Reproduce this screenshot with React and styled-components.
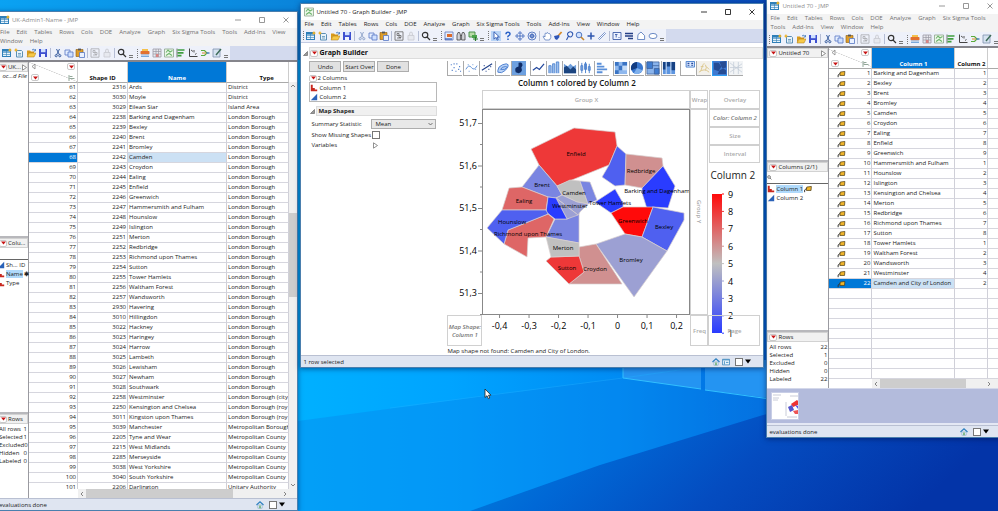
import React from 'react'
import styled, { createGlobalStyle, css } from 'styled-components'

const MENU = ['File', 'Edit', 'Tables', 'Rows', 'Cols', 'DOE', 'Analyze', 'Graph', 'Six Sigma Tools', 'Tools', 'Add-Ins', 'View', 'Window', 'Help']

const SHAPES = [
  [61, 2316, 'Ards', 'District'],
  [62, 3030, 'Moyle', 'District'],
  [63, 3029, 'Eilean Siar', 'Island Area'],
  [64, 2238, 'Barking and Dagenham', 'London Borough'],
  [65, 2239, 'Bexley', 'London Borough'],
  [66, 2240, 'Brent', 'London Borough'],
  [67, 2241, 'Bromley', 'London Borough'],
  [68, 2242, 'Camden', 'London Borough'],
  [69, 2243, 'Croydon', 'London Borough'],
  [70, 2244, 'Ealing', 'London Borough'],
  [71, 2245, 'Enfield', 'London Borough'],
  [72, 2246, 'Greenwich', 'London Borough'],
  [73, 2247, 'Hammersmith and Fulham', 'London Borough'],
  [74, 2248, 'Hounslow', 'London Borough'],
  [75, 2249, 'Islington', 'London Borough'],
  [76, 2251, 'Merton', 'London Borough'],
  [77, 2252, 'Redbridge', 'London Borough'],
  [78, 2253, 'Richmond upon Thames', 'London Borough'],
  [79, 2254, 'Sutton', 'London Borough'],
  [80, 2255, 'Tower Hamlets', 'London Borough'],
  [81, 2256, 'Waltham Forest', 'London Borough'],
  [82, 2257, 'Wandsworth', 'London Borough'],
  [83, 2930, 'Havering', 'London Borough'],
  [84, 3010, 'Hillingdon', 'London Borough'],
  [85, 3022, 'Hackney', 'London Borough'],
  [86, 3023, 'Haringey', 'London Borough'],
  [87, 3024, 'Harrow', 'London Borough'],
  [88, 3025, 'Lambeth', 'London Borough'],
  [89, 3026, 'Lewisham', 'London Borough'],
  [90, 3027, 'Newham', 'London Borough'],
  [91, 3028, 'Southwark', 'London Borough'],
  [92, 2258, 'Westminster', 'London Borough (city'],
  [93, 2250, 'Kensington and Chelsea', 'London Borough (roy'],
  [94, 3011, 'Kingston upon Thames', 'London Borough (roy'],
  [95, 3039, 'Manchester', 'Metropolitan Borough'],
  [96, 2205, 'Tyne and Wear', 'Metropolitan County'],
  [97, 2215, 'West Midlands', 'Metropolitan County'],
  [98, 2285, 'Merseyside', 'Metropolitan County'],
  [99, 3038, 'West Yorkshire', 'Metropolitan County'],
  [100, 3040, 'South Yorkshire', 'Metropolitan County'],
  [101, 2206, 'Darlington', 'Unitary Authority'],
]

const BOROUGHS = [
  ['Barking and Dagenham', 1],
  ['Bexley', 2],
  ['Brent', 3],
  ['Bromley', 4],
  ['Camden', 5],
  ['Croydon', 6],
  ['Ealing', 7],
  ['Enfield', 8],
  ['Greenwich', 9],
  ['Hammersmith and Fulham', 1],
  ['Hounslow', 2],
  ['Islington', 3],
  ['Kensington and Chelsea', 4],
  ['Merton', 5],
  ['Redbridge', 6],
  ['Richmond upon Thames', 7],
  ['Sutton', 8],
  ['Tower Hamlets', 1],
  ['Waltham Forest', 2],
  ['Wandsworth', 3],
  ['Westminster', 4],
  ['Camden and City of London', 2],
]

const RAMP = { 1: '#2a3cff', 2: '#4f60f0', 3: '#7a85e1', 4: '#9ca0d3', 5: '#c0c0c0', 6: '#d09090', 7: '#de6666', 8: '#ee3838', 9: '#ff0a0a' }

const REGIONS = [
  [8, '92,19 133,23 135,37 127,56 75,77 57,56 49,40'],
  [2, '135,37 144,45 143,76 133,77 120,68 127,56'],
  [6, '144,45 180,49 181,57 160,79 143,76'],
  [1, '181,57 193,77 186,99 171,98 165,100 160,84 160,79'],
  [3, '57,56 75,77 80,86 74,89 66,88 40,78'],
  [7, '40,78 27,79 20,101 64,101 66,88'],
  [5, '75,77 88,71 98,72 106,95 95,93 80,86'],
  [3, '98,72 108,73 115,91 106,95'],
  [3, '73,110 85,110 97,103 97,134 64,128'],
  [4, '80,86 95,93 106,95 98,103 96,106 74,89'],
  [4, '74,89 96,106 85,110'],
  [1, '66,88 74,89 85,110 73,110 64,103'],
  [1, '133,80 141,94 141,98 129,104 113,93'],
  [9, '129,104 141,98 171,98 160,128 143,125'],
  [2, '171,98 202,104 202,111 185,142 160,128'],
  [4, '160,128 185,142 152,188 114,135 143,125'],
  [6, '97,138 114,135 140,175 87,175 102,163 97,147'],
  [8, '69,148 97,147 102,163 87,175 64,152'],
  [5, '64,128 97,134 97,147 69,148'],
  [7, '66,105 72,110 64,128 46,129 45,148 22,135 26,121'],
  [2, '20,101 64,101 66,105 26,121 22,135 5,119'],
]

const MAP_LABELS = [
  ['Enfield', 94, 45],
  ['Redbridge', 159, 62],
  ['Barking and Dagenham', 175, 82],
  ['Brent', 60, 76],
  ['Camden', 92, 84],
  ['Ealing', 42, 92],
  ['Tower Hamlets', 128, 94],
  ['Westminster', 88, 97],
  ['Greenwich', 151, 112],
  ['Bexley', 182, 118],
  ['Hounslow', 30, 113],
  ['Richmond upon Thames', 46, 125],
  ['Merton', 81, 139],
  ['Bromley', 149, 151],
  ['Sutton', 85, 159],
  ['Croydon', 113, 160],
]

/* toolbar glyphs, all on a 10 x 10 grid */
const GLYPHS = {
  newTable: (
    <>
      <rect x="0.5" y="1.5" width="8" height="7" fill="#e8f3fb" stroke="#2f7fb8" />
      <path d="M0.5 4.5h8M0.5 6.5h8M4.5 2v6" stroke="#2f7fb8" strokeWidth="0.6" />
      <rect x="1" y="2" width="8" height="1.6" fill="#2f7fb8" />
      <path d="M8 0l0.8 1.5 1.2 0.5-1.2 0.8L8 4 7 2.8 5.8 2 7 1.5z" fill="#f0b429" />
    </>
  ),
  newScript: (
    <>
      <path d="M2.5 2.5h5l1 1v5.5h-6z" fill="#e8f3fb" stroke="#5b8fb5" />
      <path d="M4 5.5h3M4 7h3" stroke="#5b8fb5" strokeWidth="0.8" />
      <path d="M2 0l0.8 1.5L4 2l-1.2 0.8L2 4 1 2.8 0 2l1-0.5z" fill="#f0b429" />
    </>
  ),
  open: (
    <>
      <path d="M1 2.5h3l1 1h3V5H3L1 9z" fill="#d99a1c" />
      <path d="M3 5h7L8 9H1z" fill="#f7c948" stroke="#a8740e" strokeWidth="0.5" />
      <path d="M6 2q2-2 3 0.5M9.4 1v2H7.6" fill="none" stroke="#2f6bb8" strokeWidth="0.8" />
    </>
  ),
  save: (
    <>
      <path d="M1 1h8v8H1z" fill="#3d4fd0" />
      <path d="M3 1h4.5v3.2H3z" fill="#cfe0ff" />
      <path d="M3 6h4v3H3z" fill="#eef3ff" />
    </>
  ),
  cut: <path d="M3.5 1l3 6M6.5 1l-3 6M4.3 7.7a1.1 1.1 0 1 1-2.2 0 1.1 1.1 0 0 1 2.2 0M7.9 7.7a1.1 1.1 0 1 1-2.2 0 1.1 1.1 0 0 1 2.2 0" fill="none" stroke="#3b5fa0" strokeWidth="1" />,
  copy: (
    <>
      <path d="M1 2h5v5H1z" fill="#e6efff" stroke="#5777c4" strokeWidth="0.8" />
      <path d="M4 4h5v5H4z" fill="#cfe0ff" stroke="#5777c4" strokeWidth="0.8" />
    </>
  ),
  paste: (
    <>
      <path d="M1 1.5h7v7H1z" fill="#dd9d2a" stroke="#8a5a10" strokeWidth="0.6" />
      <path d="M3 0.6h3v1.8H3z" fill="#555" />
      <path d="M4.5 4.5h5v5h-5z" fill="#eaf1ff" stroke="#5777c4" strokeWidth="0.8" />
    </>
  ),
  script: <path d="M1 0.8h8v8.4H1zM3 2.5h2v2H3zM5 4.5h2v2H5zM3 7h4" fill="none" stroke="#666" strokeWidth="0.8" />,
  lock: <path d="M2 4.5h6v4.5H2zM3.5 4.5V2.6a1.5 1.5 0 0 1 3 0v1.9" fill="#e2e2e6" stroke="#a4a4aa" strokeWidth="0.8" />,
  search: <path d="M6.8 4a2.7 2.7 0 1 1-5.4 0 2.7 2.7 0 0 1 5.4 0M6 6l3 3" fill="none" stroke="#333" strokeWidth="1.2" />,
  printer: (
    <>
      <path d="M2 1h6v3H2z" fill="#f4c14c" />
      <rect x="0.5" y="3" width="9" height="3.4" rx="0.8" fill="#e2702e" />
      <path d="M1 6.4h8V9H1z" fill="#7aa7d8" />
      <path d="M1 7.2h8" stroke="#fff" strokeWidth="0.7" />
    </>
  ),
  summary: (
    <>
      <path d="M1 1h8v8H1z" fill="#e9e9ee" stroke="#9a9aa4" strokeWidth="0.8" />
      <path d="M1 3.5h8M1 6h8M4 1v8M6.5 1v8" stroke="#9a9aa4" strokeWidth="0.7" />
      <path d="M4 6h2.5v3H4z" fill="#d78383" />
    </>
  ),
  greenMap: (
    <>
      <path d="M0.5 1h9v8h-9z" fill="#eef8ea" stroke="#8aa48a" strokeWidth="0.8" />
      <path d="M2 4.5l2-2.5 2 2 2.5-1.5M2 7.5l3-2 3 2" fill="none" stroke="#6db46d" strokeWidth="1.1" />
    </>
  ),
  greenBars: (
    <>
      <path d="M1 0.5v9" stroke="#555" strokeWidth="0.8" />
      <path d="M1.5 2h7M1.5 4.8h6M1.5 7.6h4" stroke="#3f9e3f" strokeWidth="1.7" />
    </>
  ),
  fitAxis: (
    <>
      <path d="M1.5 0.5v8h8" fill="none" stroke="#444" strokeWidth="1" />
      <path d="M3 2l2 1.5M6 2v2.5M7 6.5l1.5-1" stroke="#444" strokeWidth="0.9" />
    </>
  ),
  join: (
    <>
      <path d="M1 2.5h3.5L7 5 4.5 7.5H1" fill="none" stroke="#5aaa3c" strokeWidth="1.2" />
      <path d="M6.5 5h3" stroke="#3d7ab8" strokeWidth="1.4" />
      <path d="M2 5h4" stroke="#d88b2a" strokeWidth="1" />
    </>
  ),
  edit: (
    <>
      <path d="M1 1h7v8H1z" fill="#d6e2f0" stroke="#7d93ad" strokeWidth="0.8" />
      <path d="M4 7l5-6" stroke="#3c6b58" strokeWidth="1.4" />
    </>
  ),
  report: (
    <>
      <path d="M1 1h8v8H1z" fill="#e8edfa" stroke="#5a74b8" strokeWidth="0.8" />
      <path d="M3 3h5v3H3z" fill="#dd6a2a" />
      <path d="M1 8h7" stroke="#2e56b0" strokeWidth="1.2" />
    </>
  ),
  binoculars: <path d="M1 9V4l1-2.5h1.6L4.4 4v5zM9 9V4L8 1.5H6.4L5.6 4v5zM4.4 4.5h1.4" fill="#d4d4da" stroke="#444" strokeWidth="0.8" />,
  addData: (
    <>
      <path d="M1 1h6v5H1z" fill="#b9dca8" stroke="#3f8a3f" strokeWidth="0.9" />
      <path d="M4 4h5v3H4z" fill="#4aa44a" />
      <path d="M5 8h5M7.5 6v4" stroke="#2b7a2b" strokeWidth="1.2" />
    </>
  ),
  arrow: <path d="M3 0.8v7.4l1.8-1.8 1.4 2.8 1-0.6-1.2-2.6h2.4z" fill="#fff" stroke="#2a56b0" strokeWidth="0.9" />,
  help: <path d="M3 3.2q0-2 2-2t2 1.8q0 1-1.2 1.6T5 6.2M5 7.6v1.4" fill="none" stroke="#2a62c8" strokeWidth="1.5" />,
  move: <path d="M5 0.5l1.6 1.8H3.4zM5 9.5l1.6-1.8H3.4zM0.5 5l1.8-1.6v3.2zM9.5 5L7.7 3.4v3.2zM4 4h2v2H4z" fill="#dfe9ff" stroke="#3a62b8" strokeWidth="0.8" />,
  globe: <path d="M9 5a4 4 0 1 1-8 0 4 4 0 0 1 8 0M5 2v6M2 5h6M3.5 3.5h3v3h-3z" fill="none" stroke="#3a62b8" strokeWidth="0.8" />,
  hand: <path d="M3.2 9L1 5.5l1-0.5 1 1V2.5l1-0.5 0.5 0.5L5 1.500l1 0.500 0.500 0.500h1l0.500 1 0.800 0.500V6.500L7.500 9z" fill="#fff" stroke="#4a70b8" strokeWidth="0.7" />,
  brush: (
    <>
      <path d="M5 5l3.6-4" stroke="#d88b2a" strokeWidth="1.8" />
      <path d="M1 5l5-1 0.5 2L4 9l-2-1z" fill="#2f56b8" />
    </>
  ),
  lasso: <path d="M2.5 9l2-4q-2-2 0-3.5t3.5 0 0 3.5-3.5 0" fill="none" stroke="#2e56b0" strokeWidth="1.1" />,
  zoomIn: (
    <>
      <circle cx="4" cy="4" r="2.8" fill="#cfe0ff" stroke="#3f69b8" strokeWidth="0.9" />
      <path d="M6 6l3 3" stroke="#c7862a" strokeWidth="1.6" />
    </>
  ),
  plus: <path d="M5 1.5v7M1.5 5h7" stroke="#2e56b0" strokeWidth="1.5" />,
  line: <path d="M1.5 7.5L7.5 1.5l1 1L2.5 8.5z" fill="#fff" stroke="#5a7cc0" strokeWidth="0.8" />,
  note: <path d="M1 1.5h8v7H1zM3 3.5h2.5M4.2 3.5v3M6.5 6.5h1" fill="#eef3ff" stroke="#3f5fa8" strokeWidth="0.9" />,
  lines: <path d="M1 2.5h8M1 5h8M4 7.5h5" stroke="#243f86" strokeWidth="1.5" />,
  polygon: <path d="M2 3.5L5 1l3.6 3.6V8.5H1.6z" fill="#fff" stroke="#4a70b8" strokeWidth="0.8" />,
  ellipse: <ellipse cx="5" cy="5" rx="4" ry="2.6" fill="#fff" stroke="#4a70b8" strokeWidth="0.8" />,
  home: (
    <>
      <path d="M0.6 5L5 1l4.4 4" fill="none" stroke="#2a7fc0" strokeWidth="1.4" />
      <path d="M2.4 5h5.2v4H2.4z" fill="#f3f9ff" stroke="#5b8fb5" strokeWidth="0.6" />
      <path d="M4.2 5.6h1.6V9H4.2z" fill="#4a9a4a" />
    </>
  ),
  list: (
    <>
      <path d="M0.6 1.6h8.8v7H0.6z" fill="#e8f3fb" stroke="#2f7fb8" strokeWidth="0.9" />
      <path d="M1 2.4h8M3 4v4M5 5.5h3" stroke="#2f7fb8" strokeWidth="1" />
    </>
  ),
  tag: (
    <>
      <path d="M0.8 9V6.2L4 3.6" fill="none" stroke="#333" strokeWidth="1.2" />
      <path d="M3.4 2.6l5.8-0.8-0.4 5H3z" fill="#f2b62a" stroke="#4a3a14" strokeWidth="0.9" />
    </>
  ),
  nominal: <path d="M1 9V1h2.4v4H6v2h3v2z" fill="#c8281e" />,
  continuous: <path d="M1 9L9 1v8z" fill="#2a62b8" />,
}

const Glyph = ({ name }) => (
  <svg width="10" height="10" viewBox="0 0 10 10" aria-hidden="true">
    {GLYPHS[name]}
  </svg>
)

/* chart type thumbnails, 15 x 15 */
const CHARTS = {
  points: <path d="M3 4h1M6 7h1M9 3h1M12 6h1M4 10h1M8 11h1M11 9h1M6 3h1M13 11h1" stroke="#2f66c0" strokeWidth="1.3" />,
  smoother: <path d="M2 9q3-6 6-2t6-2M4 4h1M9 4h1M12 9h1M5 11h1" fill="none" stroke="#4a82d0" strokeWidth="0.9" />,
  fit: <path d="M2 10l11-7M4 5h1M9 9h1M11 6h1M6 11h1" stroke="#20408a" strokeWidth="1.2" />,
  contourLine: <path d="M2 10q0-4 5-6t6 0-3 6-8 2zM5 9q1-3 5-3t-1 3z" fill="#b9d2f6" stroke="#3c74cc" strokeWidth="0.9" />,
  heat: (
    <>
      <path d="M0 0h15v15H0z" fill="#6da0e0" />
      <path d="M4 12q-2-5 3-6V2q3-1 4 1t-1 4q2 5-3 6z" fill="#0f2c66" />
    </>
  ),
  lineChart: <path d="M2 10l4-3 3 2 5-6" fill="none" stroke="#23489c" strokeWidth="1.3" />,
  bar: <path d="M2 13V5h2.4v8M6 13V3h2.4v10M10 13V1h2.6v12" fill="#9cc0f0" stroke="#4a80cc" strokeWidth="0.9" />,
  area: (
    <>
      <path d="M1 13V3l4 3 3-3 3 3 3-2v9z" fill="#6f9fdc" />
      <path d="M1 13V7l3-2 4 4 3-3 3 3v4z" fill="#1c4580" />
    </>
  ),
  box: <path d="M3 2v11M7 1v12M11 3v10M2 5h2v5H2zM6 3h2v6H6zM10 6h2v4h-2z" fill="#cfe2fc" stroke="#4a80cc" strokeWidth="1" />,
  histogram: <path d="M2 3h5M2 6h8M2 9h11M2 12h6" stroke="#5a90da" strokeWidth="2" />,
  heatmap: (
    <>
      <path d="M1 1h13v13H1z" fill="#8fb8ee" />
      <path d="M1 1h4v4H1zM9 1h5v4H9zM5 5h4v5H5zM1 10h4v4H1z" fill="#3a74c4" />
      <path d="M9 5h5v5H9z" fill="#c4dcf8" />
    </>
  ),
  pie: (
    <>
      <circle cx="7.5" cy="7.5" r="6.5" fill="#3a78d0" />
      <path d="M7.5 7.5V1a6.5 6.5 0 0 0-6 9z" fill="#123c82" />
      <path d="M7.5 7.5l6 2.5A6.5 6.5 0 0 1 4 13z" fill="#7fb0ec" />
    </>
  ),
  treemap: (
    <>
      <path d="M1 1h13v13H1z" fill="#8ab4ec" stroke="#3d5f98" strokeWidth="0.8" />
      <path d="M1 1h6v7H1zM9 8h5v6H9z" fill="#3f7cd0" stroke="#3d5f98" strokeWidth="0.8" />
      <path d="M7 5h7" stroke="#3d5f98" strokeWidth="0.8" />
    </>
  ),
  mosaic: (
    <>
      <path d="M1 1h13v13H1z" fill="#5d95e0" />
      <path d="M1 1h3v8H1zM5 1h4v5H5zM10 1h4v9h-4z" fill="#164284" />
      <path d="M4.5 1v13M9.5 1v13" stroke="#fff" strokeWidth="0.7" />
    </>
  ),
  caption: (
    <>
      <path d="M5.5 0.5h9v6h-9z" fill="#dbe9ff" stroke="#4a80cc" strokeWidth="1" />
      <path d="M7 2.5h2M11 2.5h2M7 4.5h2M11 4.5h2" stroke="#23489c" strokeWidth="1.2" />
    </>
  ),
  formula: (
    <>
      <path d="M0 0h15v15H0z" fill="#f3f1ec" />
      <path d="M4 11q3-10 4-8M4 6h3M9 4q2 3 0 6M10 6l3 3M2 12q6-5 11 0" fill="none" stroke="#dcc68a" strokeWidth="1" />
    </>
  ),
  mapShapes: (
    <>
      <path d="M0 0h15v15H0z" fill="#3f79d0" />
      <path d="M1 2l5 0 3 4-3 5-5-2zM7 1l7-1v7l-4 1zM7 10l4-2 3 2v4H5z" fill="#264c94" />
    </>
  ),
  parallel: (
    <>
      <path d="M0 0h15v15H0z" fill="#f2f4f6" />
      <path d="M1 2l13 10M1 12L14 3M1 7h13M5 1v13M10 1v13" stroke="#c2ccd8" strokeWidth="0.8" />
    </>
  ),
}

const CHART_GROUPS = [
  ['points', 'smoother', 'fit', 'contourLine', 'heat'],
  ['lineChart', 'bar', 'area', 'box', 'histogram'],
  ['heatmap', 'pie', 'treemap', 'mosaic'],
  ['caption', 'formula', 'mapShapes', 'parallel'],
]

const FILE_TOOLS = [
  [['newTable', 'newScript', 'open', 'save'], 2],
  [['cut', 'copy', 'paste'], 1],
  [['script', 'lock'], 2],
  [['search'], 2],
]

const DATA_TOOLS = [[['printer', 'summary', 'greenMap', 'greenBars', 'fitAxis', 'join', 'edit'], 2]]

const Tools = ({ groups, active, faded = [] }) => (
  <ToolStrip>
    <Grip />
    {groups.map(([names, gap], i) => (
      <ToolGroup key={i} $gap={gap} $divided={i > 0}>
        {names.map((name) => (
          <Tool key={name} type="button" aria-label={name} $active={name === active} $faded={faded.includes(name)}>
            <Glyph name={name} />
          </Tool>
        ))}
      </ToolGroup>
    ))}
    <Overflow />
  </ToolStrip>
)

const TitleRow = ({ icon, title, active }) => (
  <TitleBar $active={active}>
    <Glyph name={icon} />
    <WindowTitle>{title}</WindowTitle>
    {[
      ['Minimize', 'M0 4h6'],
      ['Maximize', 'M0.5 1.5h5v5h-5z'],
      ['Close', 'M0.5 1.5l5 5M5.5 1.5l-5 5'],
    ].map(([label, d]) => (
      <WindowButton key={label} type="button" aria-label={label}>
        <svg width="6" height="8" viewBox="0 0 6 8">
          <path d={d} fill="none" stroke="currentColor" strokeWidth="0.9" />
        </svg>
      </WindowButton>
    ))}
  </TitleBar>
)

const Menu = ({ active }) => (
  <MenuBar $active={active}>
    {MENU.map((item) => (
      <MenuItem key={item} type="button">
        {item}
      </MenuItem>
    ))}
  </MenuBar>
)

const RedTriangle = () => (
  <Hotspot type="button" aria-label="Options">
    <svg width="5" height="4" viewBox="0 0 5 4">
      <path d="M0 0.5h5L2.5 3.5z" fill="#c81414" />
    </svg>
  </Hotspot>
)

const Disclosure = ({ open }) => (
  <svg width="5" height="7" viewBox="0 0 5 7" aria-hidden="true">
    <path d={open ? 'M0.5 5.5h4v-4z' : 'M0.5 0.8v5.4l4-2.7z'} fill={open ? '#999' : '#fff'} stroke="#777" strokeWidth="0.8" />
  </svg>
)

const Chevron = ({ turn }) => (
  <svg width="8" height="8" viewBox="0 0 8 8" aria-hidden="true">
    <path d="M2 5l2-2 2 2" fill="none" stroke="#777" strokeWidth="0.9" transform={`rotate(${turn} 4 4)`} />
  </svg>
)

const CornerCell = () => (
  <Corner>
    <CornerLine>
      <svg width="5" height="7" viewBox="0 0 5 7">
        <path d="M4 1v5L1 3.5z" fill="none" stroke="#888" strokeWidth="0.8" />
      </svg>
      <RedTriangle />
    </CornerLine>
    <CornerLine>
      <RedTriangle />
      <svg width="7" height="6" viewBox="0 0 7 6">
        <path d="M1 0v6M1.5 1.5h3M1.5 3.5h5" stroke="#93a89a" />
      </svg>
    </CornerLine>
  </Corner>
)

const HBar = ({ inset, ratio }) => (
  <HScroll $inset={inset}>
    <Chevron turn={-90} />
    <HTrack>
      <HThumb $ratio={ratio} />
    </HTrack>
    <Chevron turn={90} />
  </HScroll>
)

const StatusBar = ({ text, withList }) => (
  <Status>
    <span>{text}</span>
    <StatusIcons>
      <Glyph name="home" />
      {withList && <Glyph name="list" />}
      <StatusCheck type="checkbox" aria-label="Lock window" />
      <svg width="6" height="5" viewBox="0 0 6 5">
        <path d="M0 0.5h6L3 4.5z" />
      </svg>
    </StatusIcons>
  </Status>
)

const RowCounts = ({ counts }) => (
  <Counts>
    {counts.map(([label, n]) => (
      <div key={label}>
        <dt>{label}</dt>
        <dd>{n}</dd>
      </div>
    ))}
  </Counts>
)

const ShapeTable = () => (
  <TableWindow>
    <TitleRow icon="newTable" title="UK-Admin1-Name - JMP" />
    <Menu />
    <ToolArea>
      <Tools groups={FILE_TOOLS} faded={['script', 'lock']} />
      <Tools groups={DATA_TOOLS} />
    </ToolArea>
    <Body>
      <Sidebar $width={32}>
        <Panel $grow={1}>
          <PanelHead>
            <RedTriangle />
            <span>UK...</span>
            <Disclosure />
          </PanelHead>
          <PanelNote>oc...d File</PanelNote>
        </Panel>
        <Panel $grow={1}>
          <PanelHead>
            <RedTriangle />
            <span>Colu...</span>
          </PanelHead>
          <SearchBox type="search" aria-label="Search columns" />
          <ColumnItem>
            <Glyph name="continuous" />
            <span>Sh... ID</span>
          </ColumnItem>
          <ColumnItem $selected>
            <Glyph name="nominal" />
            <span>Name</span>
            <b>✱</b>
          </ColumnItem>
          <ColumnItem>
            <Glyph name="nominal" />
            <span>Type</span>
          </ColumnItem>
        </Panel>
        <Panel $basis={86}>
          <PanelHead>
            <RedTriangle />
            <span>Rows</span>
          </PanelHead>
          <RowCounts counts={[['All rows', 1], ['Selected', 1], ['Excluded', 0], ['Hidden', 0], ['Labeled', 0]]} />
        </Panel>
      </Sidebar>
      <Main>
        <TableView>
          <Grid>
            <colgroup>
              <col width="49" />
              <col width="50" />
              <col width="99" />
              <col />
            </colgroup>
            <thead>
              <tr>
                <th>
                  <CornerCell />
                </th>
                <HeadCell>Shape ID</HeadCell>
                <HeadCell $selected>Name</HeadCell>
                <HeadCell $wide>Type</HeadCell>
              </tr>
            </thead>
            <tbody>
              {SHAPES.map(([n, id, name, type]) => (
                <tr key={n}>
                  <Cell $align="right" $marked={n === 68}>{n}</Cell>
                  <Cell $align="right">{id}</Cell>
                  <Cell $tinted={n === 68}>{name}</Cell>
                  <Cell>{type}</Cell>
                </tr>
              ))}
            </tbody>
          </Grid>
          <VScroll>
            <Chevron turn={0} />
            <span />
            <VThumb />
            <span />
            <Chevron turn={180} />
          </VScroll>
        </TableView>
        <HBar inset={49} ratio={75} />
      </Main>
    </Body>
    <StatusBar text="evaluations done" />
  </TableWindow>
)

const BoroughTable = () => (
  <BoroughWindow>
    <TitleRow icon="newTable" title="Untitled 70 - JMP" />
    <Menu />
    <ToolArea>
      <Tools groups={FILE_TOOLS} faded={['script', 'lock']} />
      <Tools groups={DATA_TOOLS} />
    </ToolArea>
    <Body>
      <Sidebar $width={62}>
        <Panel $grow={2}>
          <PanelHead>
            <RedTriangle />
            <span>Untitled 70</span>
            <Disclosure />
          </PanelHead>
        </Panel>
        <Panel $grow={3}>
          <PanelHead>
            <RedTriangle />
            <span>Columns (2/1)</span>
          </PanelHead>
          <SearchRow>
            <Glyph name="search" />
            <SearchBox type="search" aria-label="Search columns" />
          </SearchRow>
          <ColumnItem $selected>
            <Glyph name="nominal" />
            <span>Column 1</span>
            <Glyph name="tag" />
          </ColumnItem>
          <ColumnItem>
            <Glyph name="continuous" />
            <span>Column 2</span>
          </ColumnItem>
        </Panel>
        <Panel $basis={58}>
          <PanelHead>
            <RedTriangle />
            <span>Rows</span>
          </PanelHead>
          <RowCounts counts={[['All rows', 22], ['Selected', 1], ['Excluded', 0], ['Hidden', 0], ['Labeled', 22]]} />
        </Panel>
      </Sidebar>
      <Main>
        <Grid>
          <colgroup>
            <col width="43" />
            <col width="83" />
            <col width="33" />
            <col />
          </colgroup>
          <thead>
            <tr>
              <th>
                <CornerCell />
              </th>
              <HeadCell $selected>Column 1</HeadCell>
              <HeadCell>Column 2</HeadCell>
              <HeadCell />
            </tr>
          </thead>
          <tbody>
            {BOROUGHS.map(([name, value], i) => (
              <tr key={name}>
                <Cell $marked={i === 21}>
                  <RowState>
                    <Glyph name="tag" />
                    {i + 1}
                  </RowState>
                </Cell>
                <Cell $tinted={i === 21}>{name}</Cell>
                <Cell $align="right">{value}</Cell>
                <Cell />
              </tr>
            ))}
            {Array.from({ length: 9 }, (_, i) => (
              <tr key={i}>
                <Cell />
                <Cell />
                <Cell />
                <Cell />
              </tr>
            ))}
          </tbody>
        </Grid>
        <HBar inset={43} ratio={82} />
      </Main>
    </Body>
    <Tray>
      <Thumb viewBox="0 0 26 26">
        <path d="M0 0h26v26H0z" fill="#fff" />
        <path d="M1 2h8M1 5h6M1 7h5M18 3h8M14 9v14M15 24h10" stroke="#c9ccd8" />
        <path d="M19 11l6-4 1 1v4l-5 2z" fill="#e33" />
        <path d="M16 14l4-2 2 5-4 2z" fill="#55c" />
        <path d="M21 18l5-1v4h-3z" fill="#e55" />
        <path d="M23 12l3 1v3z" fill="#55e" />
      </Thumb>
    </Tray>
    <StatusBar text="evaluations done" />
  </BoroughWindow>
)

const GraphBuilder = () => (
  <GraphWindow>
    <TitleRow icon="greenMap" title="Untitled 70 - Graph Builder - JMP" active />
    <Menu active />
    <ToolArea $active>
      <Tools groups={FILE_TOOLS} faded={['cut', 'lock']} />
      <Tools groups={[[['report', 'binoculars', 'addData'], 2]]} />
      <Tools
        active="arrow"
        groups={[
          [['arrow', 'help', 'move', 'globe'], 2],
          [['hand', 'brush', 'lasso', 'zoomIn', 'plus', 'line'], 1],
          [['note', 'lines', 'polygon', 'ellipse'], 2],
        ]}
      />
    </ToolArea>
    <OutlineRow>
      <Disclosure open />
      <OutlineTitle>
        <RedTriangle />
        <h1>Graph Builder</h1>
      </OutlineTitle>
    </OutlineRow>
    <Builder>
      <Controls>
        <ButtonRow>
          <ActionButton type="button">Undo</ActionButton>
          <ActionButton type="button">Start Over</ActionButton>
          <ActionButton type="button">Done</ActionButton>
        </ButtonRow>
        <ColumnsLabel>
          <RedTriangle />2 Columns
        </ColumnsLabel>
        <ColumnBox>
          <ColumnItem>
            <Glyph name="nominal" />
            <span>Column 1</span>
          </ColumnItem>
          <ColumnItem>
            <Glyph name="continuous" />
            <span>Column 2</span>
          </ColumnItem>
        </ColumnBox>
        <SubOutline>
          <Disclosure open />
          <h2>Map Shapes</h2>
        </SubOutline>
        <Fields>
          <label htmlFor="stat">Summary Statistic</label>
          <Select id="stat" defaultValue="Mean">
            <option>Mean</option>
            <option>Median</option>
          </Select>
          <label htmlFor="missing">Show Missing Shapes</label>
          <Check id="missing" type="checkbox" />
          <span>Variables</span>
          <Expander type="button" aria-label="Variables">
            <Disclosure />
          </Expander>
        </Fields>
      </Controls>
      <Stage>
        <ChartTypes>
          {CHART_GROUPS.map((group) => (
            <ChartGroup key={group[0]}>
              {group.map((name) => (
                <ChartButton key={name} type="button" aria-label={name} $active={name === 'mapShapes'}>
                  <svg width="14" height="14" viewBox="0 0 15 15">
                    {CHARTS[name]}
                  </svg>
                </ChartButton>
              ))}
            </ChartGroup>
          ))}
        </ChartTypes>
        <ChartTitle>Column 1 colored by Column 2</ChartTitle>
        <PlotGrid>
          <Zone $area="gx">Group X</Zone>
          <Zone $area="wrap">Wrap</Zone>
          <YAxis viewBox="0 0 35 206">
            {['51,7', '51,6', '51,5', '51,4', '51,3'].map((t, i) => (
              <g key={t}>
                <text x="30" y={17 + i * 42.5} textAnchor="end">{t}</text>
                <path d={`M31 ${14.5 + i * 42.5}h4M33 ${35.5 + i * 42.5}h2`} stroke="#888" />
              </g>
            ))}
          </YAxis>
          <Plot viewBox="1 1 206 204">
            <g stroke="#d8d0d0" strokeWidth="0.7">
              {REGIONS.map(([value, points]) => (
                <polygon key={points} points={points} fill={RAMP[value]} />
              ))}
            </g>
            {MAP_LABELS.map(([name, x, y]) => (
              <text key={name} x={x} y={y + 2} textAnchor="middle">{name}</text>
            ))}
          </Plot>
          <Zone $area="gy" $vertical>
            <span>Group Y</span>
          </Zone>
          <SideZones>
            <Zone $height={19}>Overlay</Zone>
            <Zone $height={18} $filled>Color: Column 2</Zone>
            <Zone $height={18}>Size</Zone>
            <Zone $height={18}>Interval</Zone>
            <LegendTitle>Column 2</LegendTitle>
            <Legend viewBox="0 0 50 148">
              <defs>
                <linearGradient id="ramp" x1="0" y1="0" x2="0" y2="1">
                  <stop offset="0" stopColor="#ff0a0a" />
                  <stop offset="0.5" stopColor="#c0c0c0" />
                  <stop offset="1" stopColor="#2a3cff" />
                </linearGradient>
              </defs>
              <rect x="3" y="4" width="10" height="139" fill="url(#ramp)" />
              {[9, 8, 7, 6, 5, 4, 3, 2, 1].map((n, i) => (
                <g key={n}>
                  <path d={`M13 ${4 + i * 17.4}h2`} stroke={RAMP[n]} />
                  <text x="19" y={7.5 + i * 17.4}>{n}</text>
                </g>
              ))}
            </Legend>
          </SideZones>
          <Zone $area="shape" $filled>
            <div>
              Map&nbsp;Shape:
              <br />
              Column 1
            </div>
          </Zone>
          <XAxis viewBox="0 0 208 31">
            {['-0,4', '-0,3', '-0,2', '-0,1', '0', '0,1', '0,2'].map((t, i) => (
              <g key={t}>
                <path d={`M${17.5 + i * 29.5} 0v3`} stroke="#888" />
                <text x={17.5 + i * 29.5} y="14" textAnchor="middle">{t}</text>
              </g>
            ))}
          </XAxis>
          <Zone $area="freq">Freq</Zone>
          <Zone $area="page">Page</Zone>
        </PlotGrid>
        <Message>Map shape not found: Camden and City of London.</Message>
      </Stage>
    </Builder>
    <StatusBar text="1 row selected" withList />
  </GraphWindow>
)

const App = () => {
  return (
    <>
      <GlobalStyle />
      <Desktop>
        <Wallpaper viewBox="0 0 998 511" preserveAspectRatio="none" aria-hidden="true">
          <defs>
            <linearGradient id="sky" x1="0" y1="0" x2="1" y2="0">
              <stop offset="0" stopColor="#00a2f5" />
              <stop offset="0.3" stopColor="#00b0ff" />
              <stop offset="0.45" stopColor="#00a4ff" />
              <stop offset="0.62" stopColor="#008cf4" />
              <stop offset="0.77" stopColor="#0268dc" />
              <stop offset="1" stopColor="#0238ae" />
            </linearGradient>
            <linearGradient id="top" x1="0" y1="0" x2="1" y2="0">
              <stop offset="0" stopColor="#0aa2f2" />
              <stop offset="0.3" stopColor="#0a84da" />
              <stop offset="0.6" stopColor="#0a5ccc" />
              <stop offset="1" stopColor="#0638a4" />
            </linearGradient>
            <linearGradient id="floor" x1="0" y1="0" x2="1" y2="0.2">
              <stop offset="0" stopColor="#0088e0" />
              <stop offset="0.3" stopColor="#0068d6" />
              <stop offset="0.6" stopColor="#044cc0" />
              <stop offset="1" stopColor="#0334a8" />
            </linearGradient>
          </defs>
          <rect width="998" height="511" fill="url(#sky)" />
          <rect width="998" height="60" fill="url(#top)" />
          <path d="M298 421L622 378 770 398V413L600 465 470 511H298z" fill="#0a80e8" opacity="0.35" />
          <path d="M470 511L600 465 770 413H998V511z" fill="url(#floor)" />
          <path d="M623 360h78v29l-78-11zM705 360h70v39l-70-9z" fill="#2494f2" />
          <path d="M623 360v18l78 11M705 390l65 9" fill="none" stroke="#32c0ff" />
          <path d="M390 408L623 378 700 367" fill="none" stroke="#22b0ff" opacity="0.4" />
        </Wallpaper>
        <ShapeTable />
        <BoroughTable />
        <GraphBuilder />
        <Cursor viewBox="0 0 8 12">
          <path d="M1 1v8.5l2-1.8 1.4 3 1.4-0.7-1.3-2.8H7z" fill="#fff" stroke="#222" strokeWidth="0.8" />
        </Cursor>
      </Desktop>
    </>
  )
}

export default App

const GlobalStyle = createGlobalStyle`
  * {
    box-sizing: border-box;
  }
  body {
    margin: 0;
    font: 6px/8px 'Open Sans', sans-serif;
    color: #222;
  }
  button, input, select {
    font: inherit;
    color: inherit;
    margin: 0;
    padding: 0;
    border: 0;
    background: none;
    border-radius: 0;
  }
  h1, h2, p, dl, dd {
    margin: 0;
  }
  svg {
    display: block;
    flex: none;
  }
`

const Desktop = styled.main`
  position: relative;
  height: 100vh;
  overflow: hidden;
`

const Wallpaper = styled.svg`
  width: 100%;
  height: 100%;
`

const Cursor = styled.svg`
  position: absolute;
  left: 484px;
  top: 388px;
  width: 8px;
  height: 12px;
`

const Window = styled.section`
  position: absolute;
  display: flex;
  flex-direction: column;
  background: #fff;
  border: 1px solid #4a7fae;
  box-shadow: 0 1px 5px rgba(0, 10, 60, 0.5);
`

const TableWindow = styled(Window)`
  left: -4px;
  right: 70.1%;
  top: 11px;
  bottom: 0;
`

const GraphWindow = styled(Window)`
  left: 30.1%;
  right: 23.4%;
  top: 3px;
`

const BoroughWindow = styled(Window)`
  left: 76.8%;
  right: -4px;
  top: -3px;
`

const TitleBar = styled.header`
  display: flex;
  align-items: center;
  height: 16px;
  padding-left: 3px;
  gap: 2px;
  color: ${({ $active }) => ($active ? '#222' : '#8c8c8c')};
`

const WindowTitle = styled.span`
  flex: 1;
  white-space: nowrap;
`

const WindowButton = styled.button`
  width: 22px;
  display: flex;
  justify-content: center;
`

const MenuBar = styled.nav`
  display: flex;
  flex-wrap: wrap;
  column-gap: 7px;
  padding: 0 3px;
  background: #f3f3f3;
  color: ${({ $active }) => ($active ? '#222' : '#707070')};
`

const MenuItem = styled.button`
  line-height: 9px;
  white-space: nowrap;
`

const ToolArea = styled.div`
  display: flex;
  height: ${({ $active }) => ($active ? 14 : 16)}px;
  flex: none;
  overflow: hidden;
  background: #d3daee;
  border-bottom: ${({ $active }) => ($active ? '1px solid #c3cbe2' : '2px solid #85858c')};
`

const ToolStrip = styled.div`
  display: flex;
  align-items: center;
  padding-left: 2px;
  background: #eef1fa;
`

const Grip = styled.span`
  height: 9px;
  margin-right: 2px;
  border-left: 1px dotted #777;
`

const ToolGroup = styled.div`
  display: flex;
  gap: ${({ $gap }) => $gap}px;
  ${({ $divided }) =>
    $divided &&
    css`
      margin-left: 2px;
      padding-left: 2px;
      border-left: 1px solid #b5bdd4;
    `}
`

const Tool = styled.button`
  background: ${({ $active }) => ($active ? '#b8d4f6' : 'none')};
  opacity: ${({ $faded }) => ($faded ? 0.5 : 1)};
`

const Overflow = styled.span`
  width: 4px;
  height: 3px;
  margin: 7px 2px 0;
  border-top: 1px solid #777;
  border-bottom: 1px solid #777;
`

const Body = styled.div`
  display: flex;
  flex: 1;
  min-height: 0;
`

const Sidebar = styled.aside`
  display: flex;
  flex-direction: column;
  flex: none;
  width: ${({ $width }) => $width}px;
  border-right: 1px solid #9a9aa0;
`

const Panel = styled.section`
  flex: ${({ $grow, $basis }) => ($grow ? `${$grow} 1 0` : `0 0 ${$basis}px`)};
  min-height: 0;
  & + & {
    border-top: 2px solid #b8b8bc;
  }
`

const PanelHead = styled.div`
  display: flex;
  align-items: center;
  gap: 1px;
  height: 10px;
  padding: 0 1px;
  background: #f1f1f1;
  border: 1px solid #d2d2d2;
  white-space: nowrap;
  span {
    flex: 1;
  }
`

const PanelNote = styled.p`
  padding-right: 1px;
  text-align: right;
  font-style: italic;
  white-space: nowrap;
`

const SearchRow = styled.div`
  display: flex;
  align-items: center;
  height: 12px;
  border-bottom: 1px solid #666;
  input {
    border: 0;
  }
  svg {
    width: 5px;
    height: 5px;
  }
`

const SearchBox = styled.input`
  display: block;
  width: 100%;
  height: 12px;
  border-bottom: 1px solid #666;
  outline: 0;
`

const ColumnItem = styled.div`
  display: flex;
  align-items: center;
  gap: 1px;
  height: 9px;
  white-space: nowrap;
  svg {
    width: 8px;
    height: 8px;
  }
  span {
    background: ${({ $selected }) => ($selected ? '#b0dafb' : 'none')};
  }
`

const Counts = styled.dl`
  padding: 1px 1px 1px 2px;
  div {
    display: flex;
    justify-content: space-between;
    white-space: nowrap;
  }
`

const Hotspot = styled.button`
  display: flex;
  align-items: center;
  justify-content: center;
  flex: none;
  width: 8px;
  height: 7px;
  border: 1px solid #c9c9c9;
  border-radius: 2px;
  background: #fff;
`

const Main = styled.div`
  display: flex;
  flex-direction: column;
  flex: 1;
  min-width: 0;
`

const TableView = styled.div`
  display: flex;
  flex: 1;
  min-height: 0;
  overflow: hidden;
`

const Grid = styled.table`
  width: 100%;
  flex: 1;
  align-self: flex-start;
  table-layout: fixed;
  border-collapse: separate;
  border-spacing: 0;
  th {
    height: 20px;
    border-right: 1px solid #ccc;
    border-bottom: 1px solid #aaa;
  }
  th:first-child {
    padding: 0;
  }
`

const HeadCell = styled.th`
  padding: 0 0 0 ${({ $wide }) => ($wide ? 18 : 0)}px;
  vertical-align: bottom;
  line-height: 8px;
  font-weight: 700;
  text-align: center;
  white-space: nowrap;
  background: ${({ $selected }) => ($selected ? '#0078d7' : '#fff')};
  color: ${({ $selected }) => ($selected ? '#fff' : '#111')};
`

const Cell = styled.td`
  height: 10px;
  padding: 0 1px;
  line-height: 9px;
  overflow: hidden;
  white-space: nowrap;
  text-align: ${({ $align }) => $align || 'left'};
  border-right: 1px solid #d0d0d8;
  border-bottom: 1px solid #d6d6de;
  background: ${({ $marked, $tinted }) => ($marked ? '#0078d7' : $tinted ? '#cce1f4' : '#fff')};
  color: ${({ $marked }) => ($marked ? '#fff' : 'inherit')};
`

const RowState = styled.span`
  display: flex;
  align-items: center;
  justify-content: space-between;
  padding-left: 7px;
  svg {
    width: 9px;
    height: 8px;
  }
`

const Corner = styled.div`
  display: flex;
  flex-direction: column;
  justify-content: space-between;
  height: 20px;
  padding: 1px 2px;
  background: linear-gradient(22deg, transparent 49%, #ccc 50%, transparent 52%);
`

const CornerLine = styled.div`
  display: flex;
  align-items: center;
  justify-content: space-between;
`

const VScroll = styled.div`
  display: grid;
  grid-template-rows: 8px 2fr 84px 3fr 8px;
  flex: none;
  width: 8px;
  margin-top: 20px;
  background: #f0f0f0;
`

const VThumb = styled.div`
  background: #cdcdcd;
`

const HScroll = styled.div`
  display: flex;
  align-items: center;
  height: 9px;
  flex: none;
  margin-left: ${({ $inset }) => $inset}px;
  padding-right: 8px;
  background: #f0f0f0;
`

const HTrack = styled.div`
  flex: 1;
  height: 100%;
`

const HThumb = styled.div`
  width: ${({ $ratio }) => $ratio}%;
  height: 100%;
  background: #cdcdcd;
`

const Tray = styled.div`
  padding: 3px 4px;
  background: #b3bbdc;
  border-top: 1px solid #d4d8ea;
  border-bottom: 2px solid #e4e8f4;
`

const Thumb = styled.svg`
  width: 28px;
  height: 28px;
  border: 1px solid #c8cee6;
`

const Status = styled.footer`
  display: flex;
  align-items: center;
  justify-content: space-between;
  flex: none;
  height: 12px;
  padding: 0 12px 0 2px;
  background: #dfe5f1;
  border-top: 1px solid #b9c0d2;
`

const StatusIcons = styled.div`
  display: flex;
  align-items: center;
  gap: 2px;
  svg:not(:last-child) {
    width: 8px;
    height: 8px;
  }
`

const StatusCheck = styled.input`
  appearance: none;
  width: 8px;
  height: 8px;
  margin-left: 3px;
  background: #fff;
  border: 1px solid #777;
`

const OutlineRow = styled.div`
  display: flex;
  align-items: center;
  gap: 1px;
  padding: 4px 0 2px 2px;
`

const OutlineTitle = styled.div`
  display: flex;
  align-items: center;
  flex: 1;
  gap: 1px;
  height: 12px;
  background: #f0f0f0;
  border: 1px solid #dcdcdc;
  h1 {
    font-size: 7px;
    line-height: 10px;
    color: #111;
  }
`

const Builder = styled.div`
  display: flex;
  gap: 10px;
  padding: 0 3px 0 8px;
`

const Controls = styled.div`
  flex: none;
  width: 128px;
`

const ButtonRow = styled.div`
  display: flex;
  gap: 2px;
`

const ActionButton = styled.button`
  width: 32px;
  height: 11px;
  line-height: 8px;
  white-space: nowrap;
  background: #e1e1e1;
  border: 1px solid #adadad;
`

const ColumnsLabel = styled.div`
  display: flex;
  align-items: center;
  padding-top: 2px;
`

const ColumnBox = styled.div`
  margin-bottom: 4px;
  border: 1px solid #b8b8b8;
`

const SubOutline = styled.div`
  display: flex;
  align-items: center;
  gap: 1px;
  padding-left: 1px;
  h2 {
    flex: 1;
    padding-left: 1px;
    font-size: 6px;
    line-height: 8px;
    background: #f0f0f0;
    border: 1px solid #dcdcdc;
  }
`

const Fields = styled.div`
  display: grid;
  grid-template-columns: 60px 1fr;
  align-items: center;
  row-gap: 2px;
  padding: 3px 1px 0 2px;
  label {
    white-space: nowrap;
  }
`

const Select = styled.select`
  height: 10px;
  appearance: none;
  padding: 0 3px;
  background: #e8e8e8 url("data:image/svg+xml,%3Csvg xmlns='http://www.w3.org/2000/svg' width='5' height='4'%3E%3Cpath d='M0.5 1l2 2 2-2' fill='none' stroke='%23555' stroke-width='0.8'/%3E%3C/svg%3E") right 2px center no-repeat;
  border: 1px solid #adadad;
`

const Check = styled.input`
  appearance: none;
  width: 8px;
  height: 8px;
  margin-left: 1px;
  border: 1px solid #777;
`

const Expander = styled.button`
  margin-left: 2px;
`

const Stage = styled.div`
  flex: 1;
  min-width: 0;
`

const ChartTypes = styled.div`
  display: flex;
  gap: 4px;
`

const ChartGroup = styled.div`
  display: flex;
  gap: 1px;
`

const ChartButton = styled.button`
  width: 15px;
  height: 15px;
  background: ${({ $active }) => ($active ? '#3a86d8' : '#fff')};
  border-left: 1px solid ${({ $active }) => ($active ? '#2f9df0' : '#aaa')};
  border-bottom: 1px solid ${({ $active }) => ($active ? '#2f9df0' : '#aaa')};
`

const ChartTitle = styled.h2`
  padding: 2px 0;
  margin-right: 54px;
  text-align: center;
  font-size: 8px;
  font-weight: 600;
  line-height: 10px;
  color: #111;
`

const PlotGrid = styled.div`
  display: grid;
  grid-template-columns: 35px 1fr 18px 52px;
  grid-template-rows: 19px 206px 31px;
  grid-template-areas:
    '. gx wrap side'
    'yaxis plot gy side'
    'shape xaxis freq page';
`

const Zone = styled.div`
  grid-area: ${({ $area }) => $area || 'auto'};
  display: flex;
  align-items: center;
  justify-content: center;
  flex: none;
  text-align: center;
  height: ${({ $height }) => ($height ? `${$height}px` : 'auto')};
  border: 1px solid #d0d0d0;
  color: ${({ $filled }) => ($filled ? '#777' : '#aaa')};
  font-weight: 600;
  font-style: ${({ $filled }) => ($filled ? 'italic' : 'normal')};
  span {
    writing-mode: ${({ $vertical }) => ($vertical ? 'vertical-rl' : 'horizontal-tb')};
  }
`

const YAxis = styled.svg`
  grid-area: yaxis;
  width: 100%;
  height: 206px;
  font-size: 9px;
`

const Plot = styled.svg`
  grid-area: plot;
  width: 100%;
  height: 206px;
  border: 1px solid #888;
`

const XAxis = styled.svg`
  grid-area: xaxis;
  width: 100%;
  height: 31px;
  font-size: 9px;
`

const SideZones = styled.div`
  grid-area: side;
  display: flex;
  flex-direction: column;
  min-height: 0;
  padding-left: 1px;
`

const LegendTitle = styled.h2`
  padding: 4px 1px 7px;
  font-size: 10px;
  font-weight: 400;
  line-height: 16px;
  white-space: nowrap;
`

const Legend = styled.svg`
  width: 50px;
  height: 148px;
  font-size: 9px;
`

const Message = styled.p`
  line-height: 8px;
  padding-top: 1px;
`
